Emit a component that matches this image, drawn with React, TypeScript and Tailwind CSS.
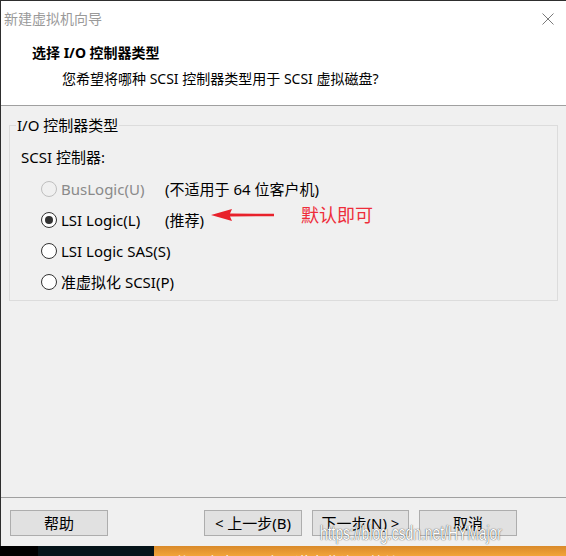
import React from "react";

const font = "font-['Noto_Sans','Noto_Sans_CJK_SC',sans-serif]";

function Radio({ checked, disabled }: { checked?: boolean; disabled?: boolean }) {
  return (
    <span
      className={
        "flex h-[16px] w-[16px] shrink-0 items-center justify-center rounded-full border " +
        (disabled ? "border-[#bfbfbf] bg-[#f0f0f0]" : "border-[#333333] bg-white")
      }
    >
      {checked && <span className="h-[8px] w-[8px] rounded-full bg-[#333333]" />}
    </span>
  );
}

function Option({
  label,
  note,
  checked,
  disabled,
  children,
}: {
  label: string;
  note?: string;
  checked?: boolean;
  disabled?: boolean;
  children?: React.ReactNode;
}) {
  return (
    <div className="flex h-[31px] items-center pl-[20px]">
      <Radio checked={checked} disabled={disabled} />
      <span className={"ml-[4px] w-[104px] whitespace-nowrap " + (disabled ? "text-[#8a8a8a]" : "text-black")}>
        {label}
      </span>
      {note && <span className="whitespace-nowrap text-black">{note}</span>}
      {children}
    </div>
  );
}

function Button({ label, w }: { label: string; w: string }) {
  return (
    <div className={"flex h-[26px] items-center justify-center border border-[#adadad] bg-[#e1e1e1] text-[15px] text-black " + w}>
      {label}
    </div>
  );
}

export default function App() {
  return (
    <div className={"relative flex h-[556px] w-[566px] flex-col overflow-hidden bg-black " + font}>
      <div className="flex h-[546px] flex-col border-l border-t border-[#2e2e2e] bg-[#f0f0f0]">
        {/* header */}
        <div className="h-[105px] border-b border-[#a0a0a0] bg-white">
          <div className="flex h-[35px] items-center justify-between pl-[3px] pr-[12px]">
            <span className="text-[14px] text-[#9a9a9a]">新建虚拟机向导</span>
            <svg width="12" height="12" viewBox="0 0 12 12">
              <path d="M0.5 0.5L11.5 11.5M11.5 0.5L0.5 11.5" stroke="#7a7a7a" strokeWidth="1" />
            </svg>
          </div>
          <div className="pl-[31px] pt-[7px] text-[14px] font-bold leading-[20px] text-black">选择 I/O 控制器类型</div>
          <div className="pl-[61px] pt-[6px] text-[14px] leading-[20px] text-black">
            您希望将哪种 SCSI 控制器类型用于 SCSI 虚拟磁盘?
          </div>
        </div>

        {/* body */}
        <div className="flex flex-1 flex-col px-[8px] pt-[9px] text-[15px] leading-[20px]">
          <fieldset className="border border-[#dcdcdc] pb-[3px]">
            <legend className="ml-[6px] px-[1px] text-black">I/O 控制器类型</legend>
            <div className="pl-[11px]">
              <div className="pt-[12px] text-black">SCSI 控制器:</div>
              <div className="mt-[6px] flex flex-col">
                <Option label="BusLogic(U)" note="(不适用于 64 位客户机)" disabled />
                <Option label="LSI Logic(L)" note="(推荐)" checked>
                  <div className="mb-[10px] flex items-center">
                    <svg width="64" height="14" viewBox="0 0 64 14" className="ml-[7px]">
                      <path d="M0 7L21 1L19 5.6L63 5.7L63 8.3L19 8.4L21 13Z" fill="#e8212b" />
                    </svg>
                    <span className="ml-[26px] whitespace-nowrap text-[18px] text-[#ee2d3a]">默认即可</span>
                  </div>
                </Option>
                <Option label="LSI Logic SAS(S)" />
                <Option label="准虚拟化 SCSI(P)" />
              </div>
            </div>
          </fieldset>
          <div className="flex-1" />
        </div>

        {/* footer */}
        <div className="flex h-[49px] border-t border-[#a0a0a0] pl-[9px] pt-[12px]">
          <Button label="帮助" w="w-[98px]" />
          <div className="ml-[96px] flex gap-[10px]">
            <Button label="< 上一步(B)" w="w-[98px]" />
            <Button label="下一步(N) >" w="w-[97px]" />
            <Button label="取消" w="w-[98px]" />
          </div>
        </div>
      </div>

      {/* strip below the window */}
      <div className="flex h-[10px] overflow-hidden">
        <div className="w-[38px] bg-black" />
        <div className="w-[116px] bg-[#061419]" />
        <div className="flex flex-1 items-start overflow-hidden bg-gradient-to-b from-[#d98a2a] to-[#f2a43a] pl-[11px]">
          <svg width="16" height="14" viewBox="0 0 16 14" className="mt-[5px]">
            <path d="M8 1L15 13H1Z" fill="none" stroke="#ffffff" strokeWidth="1.5" />
          </svg>
          <span className="ml-[10px] mt-[6px] whitespace-nowrap text-[15px] leading-[20px] text-white">
            使用本产品即表示遵守此许可协议 (http://www.vmware.com/)
          </span>
        </div>
      </div>

      {/* watermark */}
      <div className="pointer-events-none absolute left-[320px] top-[517px] origin-left scale-x-[0.66] whitespace-nowrap font-['Liberation_Sans',sans-serif] text-[21px] text-white [text-shadow:0_0_1px_rgba(0,0,0,0.7),0_0_2px_rgba(0,0,0,0.35)]">
        https://blog.csdn.net/HYMajor
      </div>
    </div>
  );
}
